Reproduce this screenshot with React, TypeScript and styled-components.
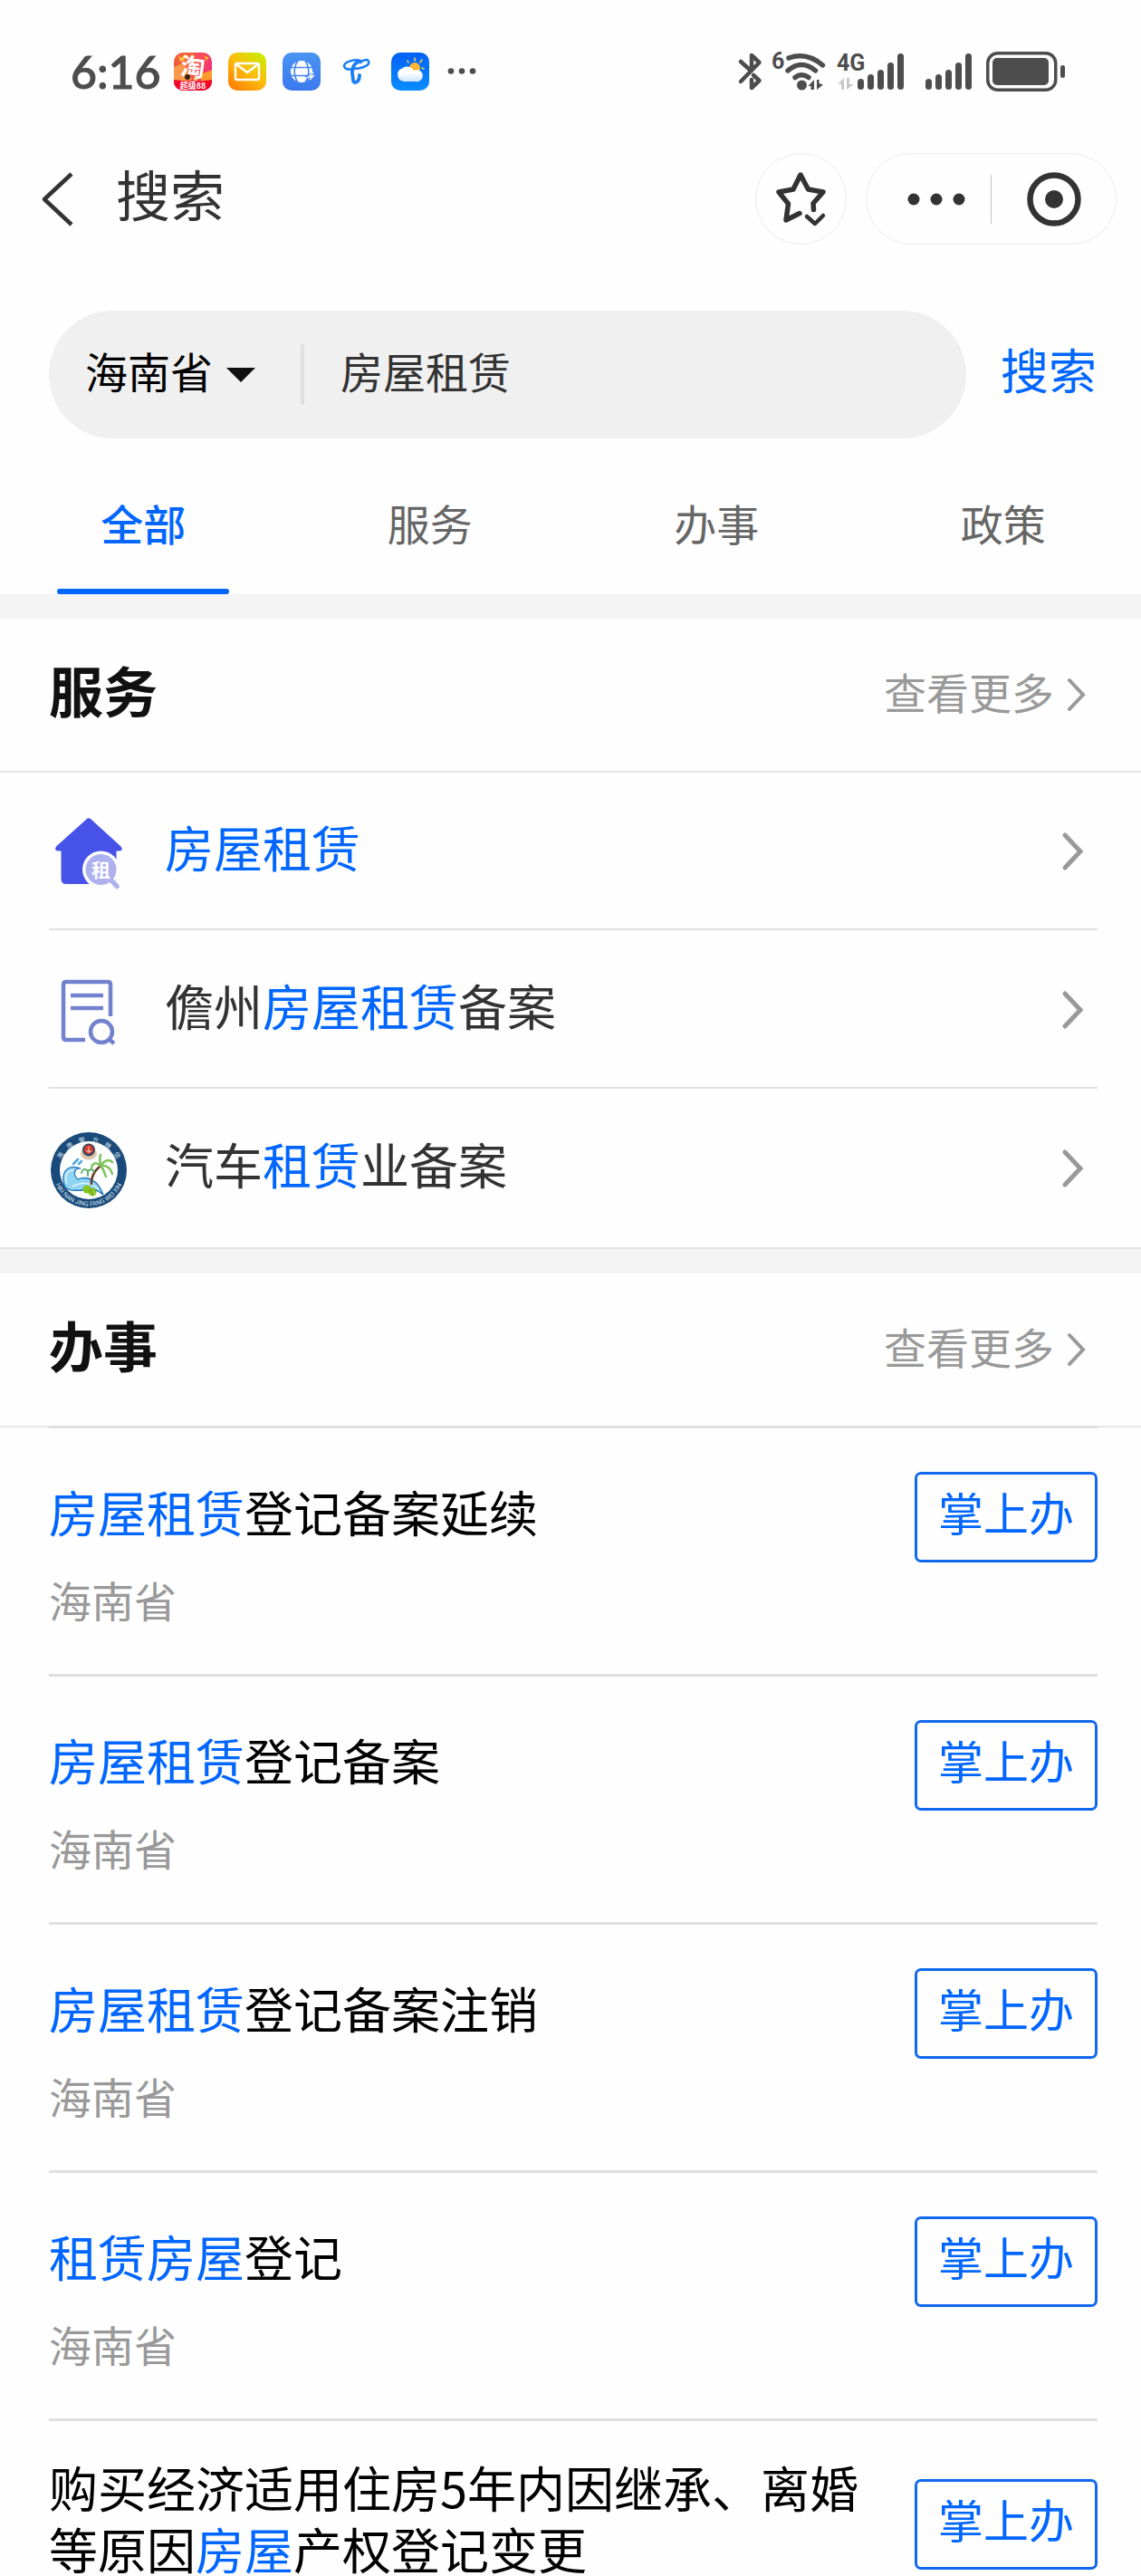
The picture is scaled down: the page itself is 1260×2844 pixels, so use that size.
import React from "react";
import styled, { createGlobalStyle } from "styled-components";

const BLUE = "#0066ff";
const INK = "#333333";
const STATUS = "#4d4d4d";
const MUTED = "#999999";

const GlobalStyle = createGlobalStyle`
  *, *::before, *::after { box-sizing: border-box; }
  body { margin: 0; background: #fefefe; }
  body, button, input, select {
    font-family: "Noto Sans CJK SC", "Noto Sans", sans-serif;
  }
  ul, h1, h2, p { margin: 0; padding: 0; list-style: none; }
  a { color: inherit; text-decoration: none; }
  button { padding: 0; border: 0; background: none; color: inherit; cursor: pointer; }
  svg { display: block; flex: none; overflow: visible; }
`;

const Page = styled.div`
  height: 100vh;
  overflow: hidden;
  background: #fefefe;
  color: #000;
`;

/* ---------- status bar ---------- */

const StatusBar = styled.div`
  display: flex;
  justify-content: space-between;
  align-items: center;
  height: 158px;
  padding: 0 83px 0 78px;
`;

const StatusGroup = styled.div<{ $gap: number }>`
  display: flex;
  align-items: center;
  gap: ${(p) => p.$gap}px;
`;

const Clock = styled.span`
  width: 96px;
  font-family: Lato, sans-serif;
  font-size: 50px;
  line-height: 60px;
  font-weight: 500;
  color: ${STATUS};
  -webkit-text-stroke: 1px ${STATUS};
`;

/* ---------- navigation ---------- */

const NavBar = styled.header`
  display: flex;
  align-items: center;
  height: 123px;
  padding: 0 27px 0 42px;
`;

const BackButton = styled.button`
  display: flex;
  width: 86px;
`;

const NavTitle = styled.h1`
  flex: 1;
  padding-bottom: 14px;
  font-size: 60px;
  line-height: 72px;
  font-weight: 400;
  color: ${INK};
`;

const RoundButton = styled.button`
  display: flex;
  align-items: center;
  justify-content: center;
  width: 101px;
  height: 101px;
  margin-right: 21px;
  border: 1px solid #ebebeb;
  border-radius: 50%;
`;

const Capsule = styled.div`
  display: flex;
  align-items: center;
  width: 277px;
  height: 101px;
  border: 1px solid #ebebeb;
  border-radius: 51px;
`;

const CapsuleButton = styled.button`
  display: flex;
  flex: 1;
  align-items: center;
  justify-content: center;
  height: 54px;
  & + & { border-left: 1px solid #c4c4c4; }
  &:first-child {
    flex: none;
    width: 137px;
    padding-left: 17px;
  }
`;

/* ---------- search ---------- */

const SearchForm = styled.form`
  display: flex;
  align-items: center;
  gap: 38px;
  padding: 62px 49px 0 54px;
`;

const SearchBox = styled.div`
  display: flex;
  flex: 1;
  align-items: center;
  min-width: 0;
  height: 141px;
  padding: 0 40px;
  border-radius: 71px;
  background: #f0f0f0;
`;

const Region = styled.label`
  display: flex;
  align-items: center;
  gap: 15px;
  padding-right: 50px;
  border-right: 4px solid #e0e0e0;
  height: 67px;
`;

const RegionSelect = styled.select`
  appearance: none;
  width: 141px;
  height: 72px;
  margin-bottom: 10px;
  padding: 0;
  border: 0;
  background: none;
  font-size: 47px;
  color: #000;
`;

const SearchInput = styled.input`
  flex: 1;
  min-width: 0;
  height: 72px;
  margin-bottom: 10px;
  padding: 0 0 0 40px;
  border: 0;
  outline: 0;
  background: none;
  font-size: 47px;
  color: ${INK};
`;

const SearchSubmit = styled.button`
  padding-bottom: 14px;
  font-size: 53px;
  line-height: 68px;
  color: ${BLUE};
`;

/* ---------- tabs ---------- */

const Tabs = styled.nav`
  display: flex;
  height: 172px;
  margin-right: -6px;
`;

const Tab = styled.button<{ $active?: boolean }>`
  position: relative;
  flex: 1;
  padding-top: 12px;
  font-size: 47px;
  font-weight: ${(p) => (p.$active ? 500 : 400)};
  color: ${(p) => (p.$active ? BLUE : "#666666")};
  &::after {
    content: "";
    position: absolute;
    left: 20%;
    right: 20%;
    bottom: 0;
    height: 6px;
    border-radius: 3px;
    background: ${(p) => (p.$active ? BLUE : "transparent")};
  }
`;

/* ---------- sections ---------- */

const Section = styled.section`
  border-top: 27px solid #f4f4f4;
`;

const SectionHeader = styled.div`
  display: flex;
  align-items: center;
  justify-content: space-between;
  height: 170px;
  padding: 0 60px 0 54px;
  border-bottom: 2px solid #e6e6e6;
`;

const SectionTitle = styled.h2`
  padding-bottom: 12px;
  font-size: 60px;
  line-height: 72px;
  font-weight: 700;
  color: #111;
`;

const MoreLink = styled.a`
  display: flex;
  align-items: center;
  gap: 14px;
  font-size: 47px;
  line-height: 64px;
  color: ${MUTED};
  span { padding-bottom: 8px; }
`;

const ServiceList = styled.ul`
  margin-top: -1px;
  border-bottom: 2px solid #e6e6e6;
`;

const ServiceItem = styled.li`
  margin: 0 48px 0 54px;
  border-bottom: 2px solid #e0e0e0;
  &:last-child { border-bottom-color: transparent; }
`;

const ServiceLink = styled.a`
  display: flex;
  align-items: center;
  height: 173px;
  padding: 2px 14px 0 0;
`;

const ServiceName = styled.span`
  flex: 1;
  padding: 0 0 10px 40px;
  font-size: 54px;
  line-height: 68px;
  color: ${INK};
`;

const Mark = styled.em`
  font-style: normal;
  color: ${BLUE};
`;

const AffairList = styled.ul`
  margin: -2px 48px 0 54px;
`;

const AffairItem = styled.li`
  min-height: 274px;
  padding: 39px 0 0;
  border-top: 3px solid #dfdfdf;
`;

const AffairMain = styled.div`
  display: flex;
  align-items: center;
  justify-content: space-between;
  gap: 20px;
  min-height: 118px;
`;

const AffairTitle = styled.a`
  padding-bottom: 13px;
  font-size: 54px;
  line-height: 68px;
  color: #000;
`;

const AffairRegion = styled.p`
  font-size: 47px;
  line-height: 64px;
  color: ${MUTED};
`;

const HandleButton = styled.button`
  flex: none;
  width: 202px;
  height: 100px;
  padding-bottom: 14px;
  border: 3px solid #1068ef;
  border-radius: 7px;
  font-size: 50px;
  line-height: 64px;
  color: ${BLUE};
`;

/* ---------- icons ---------- */

const TaobaoIcon = () => (
  <svg width="42" height="42" viewBox="0 0 42 42">
    <defs>
      <linearGradient id="tb" x1="0" y1="0" x2="1" y2="0.3">
        <stop offset="0" stopColor="#ef5a3a" />
        <stop offset="0.5" stopColor="#f5663c" />
        <stop offset="1" stopColor="#f4307a" />
      </linearGradient>
      <clipPath id="tbc"><rect width="42" height="42" rx="10" /></clipPath>
    </defs>
    <g clipPath="url(#tbc)">
      <rect width="42" height="42" fill="url(#tb)" />
      <path d="M0 16 10 12 20 30 0 32z" fill="#fb9a4a" />
      <path d="M22 0 34 0 26 12z" fill="#fa4b5c" />
      <path d="M5 3 8 6 12 2 12 8 7 10z" fill="#ffc93c" />
      <path d="M33 4 39 5 36 9z" fill="#ffb02e" />
      <path d="M30 24 42 19 42 32 30 32z" fill="#ff9a2a" />
      <path d="M0 30Q21 34 42 30V42H0z" fill="#f3062c" />
    </g>
    <text x="21" y="26" fontSize="27" fontWeight="700" fill="#fff" textAnchor="middle" transform="rotate(6 21 16)">淘</text>
    <circle cx="15" cy="27" r="3" fill="#3a2412" />
    <circle cx="24" cy="29" r="2" fill="#ffd98a" />
    <text x="21" y="40" fontSize="9" fontWeight="700" fill="#fff" textAnchor="middle">超级88</text>
  </svg>
);

const MailIcon = () => (
  <svg width="42" height="42" viewBox="0 0 42 42">
    <defs>
      <linearGradient id="ml" x1="0.1" y1="1" x2="0.9" y2="0">
        <stop offset="0" stopColor="#ff7a00" />
        <stop offset="0.5" stopColor="#fdbb0c" />
        <stop offset="1" stopColor="#c6f000" />
      </linearGradient>
    </defs>
    <rect width="42" height="42" rx="10" fill="url(#ml)" />
    <rect x="8" y="12" width="26" height="18" rx="2" fill="none" stroke="#fff" strokeWidth="2.4" />
    <path d="M9 13 21 22 33 13" fill="none" stroke="#fff" strokeWidth="2.4" strokeLinejoin="round" />
  </svg>
);

const GlobeIcon = () => (
  <svg width="42" height="42" viewBox="0 0 42 42">
    <defs>
      <linearGradient id="gl" x1="0" y1="0" x2="0" y2="1">
        <stop offset="0" stopColor="#4a94f2" />
        <stop offset="1" stopColor="#3c78ee" />
      </linearGradient>
    </defs>
    <rect width="42" height="42" rx="10" fill="url(#gl)" />
    <circle cx="21" cy="21" r="12" fill="#fff" />
    <g fill="none" stroke="#4385f0" strokeWidth="1.6">
      <path d="M8 16.500H34M8 25.500H34" />
      <path d="M17 9C12 16 12 26 17 33M25 9C30 16 30 26 25 33" />
    </g>
    <path d="M34 23 28 26 32 27 28 32" fill="none" stroke="#4385f0" strokeWidth="3" />
    <path d="M34 22 29 27 34 26 30 30" fill="none" stroke="#fff" strokeWidth="1.5" />
  </svg>
);

const TelecomIcon = () => (
  <svg width="42" height="42" viewBox="0 0 42 42" fill="none" stroke="#1a7ef5" strokeLinecap="round">
    <path d="M26 9C20 7 8 10 8 15 9 19 14 19 18 18 28 18 37 14 35 9.500 34 7 29 8 26 11" strokeWidth="2.600" />
    <path d="M24 10C19 12 16 18 17 23 18 27 17 34 20.500 33 24 32 25 28 25 25" strokeWidth="3.800" />
  </svg>
);

const WeatherIcon = () => (
  <svg width="42" height="42" viewBox="0 0 42 42">
    <defs>
      <linearGradient id="we" x1="0" y1="0" x2="0" y2="1">
        <stop offset="0" stopColor="#0062f5" />
        <stop offset="1" stopColor="#0a8cff" />
      </linearGradient>
      <linearGradient id="cl" x1="0" y1="0" x2="0" y2="1">
        <stop offset="0.4" stopColor="#fff" />
        <stop offset="1" stopColor="#cfe4ff" />
      </linearGradient>
    </defs>
    <rect width="42" height="42" rx="10" fill="url(#we)" />
    <circle cx="26" cy="17" r="6" fill="#ffb52e" />
    <path d="M26 9V6M32 11 34 8M34 17 36 18M19 11 18 9M32 22 34 24" stroke="#f5d060" strokeWidth="1.600" strokeLinecap="round" />
    <path d="M14 32A7.500 7.500 0 0 1 12 17.500 8.500 8.500 0 0 1 25 20 6.500 6.500 0 1 1 27 32Z" fill="url(#cl)" />
  </svg>
);

const StatusDots = () => (
  <svg width="42" height="42" viewBox="0 0 42 42" fill={STATUS}>
    <circle cx="6" cy="20.500" r="3.300" />
    <circle cx="18" cy="20.500" r="3.300" />
    <circle cx="30" cy="20.500" r="3.300" />
  </svg>
);

const BluetoothIcon = () => (
  <svg width="25" height="44" viewBox="0 0 25 44" fill="none" stroke={STATUS} strokeWidth="4.500" strokeLinecap="round" strokeLinejoin="round">
    <path d="M2 11 12 20M14 20V4L22.500 12 2 33" />
    <path d="M14 31V40L22.500 32 16 26" />
  </svg>
);

const WifiIcon = () => (
  <svg width="60" height="44" viewBox="0 0 60 44">
    <text x="-1" y="19" fontFamily="Roboto, sans-serif" fontSize="25" fontWeight="700" fill={STATUS}>6</text>
    <g fill="none" stroke={STATUS} strokeWidth="5.500" strokeLinecap="round">
      <path d="M18 7Q38 0 55.500 15" />
      <path d="M17 21Q32 8 47.500 21" />
      <path d="M25 28.500Q32 23 40 28.500" />
    </g>
    <circle cx="32.500" cy="37" r="5.500" fill={STATUS} />
    <path d="M46 31V42H42.500V38H39.500ZM49 42V31H51.500V35L56 36.500Z" fill={STATUS} />
  </svg>
);

const BAR_TOPS = [30, 25, 20, 12, 2];

const SignalBars = ({ x }: { x: number }) => (
  <g fill={STATUS}>
    {BAR_TOPS.map((top, i) => (
      <rect key={top} x={x + i * 11} y={top} width="7" height={42 - top} rx="3.500" />
    ))}
  </g>
);

const MobileIcon = () => (
  <svg width="85" height="44" viewBox="0 0 85 44">
    <text x="-1" y="21" fontFamily="Roboto, sans-serif" fontSize="25" fontWeight="700" fill={STATUS}>4G</text>
    <path d="M7 29V42H4V36H0ZM10 42V29H13V36H18Z" fill="#c8c8c8" />
    <SignalBars x={22} />
  </svg>
);

const SignalIcon = () => (
  <svg width="55" height="44" viewBox="0 0 55 44">
    <SignalBars x={0} />
  </svg>
);

const BatteryIcon = () => (
  <svg width="88" height="44" viewBox="0 0 88 44">
    <rect x="1.750" y="1.750" width="75" height="40.500" rx="11" fill="none" stroke={STATUS} strokeWidth="3.500" />
    <rect x="7" y="7" width="62" height="30" rx="5" fill={STATUS} />
    <rect x="82" y="15" width="5" height="14" rx="2.500" fill={STATUS} />
  </svg>
);

const BackIcon = () => (
  <svg width="44" height="60" viewBox="0 0 44 60">
    <path d="M37 2 7 30 37 58" fill="none" stroke={INK} strokeWidth="4.500" strokeLinejoin="round" />
  </svg>
);

const StarIcon = () => (
  <svg width="53" height="60" viewBox="0 0 53 60" fill="none" stroke={INK} strokeWidth="5.500" strokeLinecap="round" strokeLinejoin="round">
    <path d="M25 45.500 10 53 12.500 35 2 22 18 19 26 3 34.500 19 51 22 40 34.500 40.500 41.500" />
    <path d="M33 49 42 57 51 48" strokeWidth="4.500" />
  </svg>
);

const MoreDots = () => (
  <svg width="64" height="14" viewBox="0 0 64 14" fill={INK}>
    <circle cx="7" cy="7" r="6.500" />
    <circle cx="32" cy="7" r="6.500" />
    <circle cx="57" cy="7" r="6.500" />
  </svg>
);

const TargetIcon = () => (
  <svg width="60" height="60" viewBox="0 0 60 60">
    <circle cx="30" cy="30" r="26.500" fill="none" stroke={INK} strokeWidth="6.500" />
    <circle cx="30" cy="30" r="10" fill={INK} />
  </svg>
);

const CaretIcon = () => (
  <svg width="32" height="16" viewBox="0 0 32 16">
    <path d="M0 0H32L16 16Z" fill="#111" />
  </svg>
);

const Chevron = ({ small }: { small?: boolean }) =>
  small ? (
    <svg width="22" height="38" viewBox="0 0 22 38">
      <path d="M3 3 18 19 3 35" fill="none" stroke={MUTED} strokeWidth="4" strokeLinecap="round" />
    </svg>
  ) : (
    <svg width="26" height="42" viewBox="0 0 26 42">
      <path d="M4 3 21 21 4 39" fill="none" stroke={MUTED} strokeWidth="5" strokeLinecap="round" />
    </svg>
  );

const HouseIcon = () => (
  <svg width="88" height="88" viewBox="0 0 88 88">
    <path
      d="M41.500 8.500Q44 6 46.500 8.500L79.500 38.500Q82.500 43 78 43.500H74.500V80H19Q13.500 80 13.500 74V43.500H10Q5.500 43 8 38.500Z"
      fill="#4753e8"
    />
    <circle cx="57.500" cy="64" r="20.500" fill="#fefefe" />
    <path d="M66 76 80 90" stroke="#fefefe" strokeWidth="12" />
    <path d="M69 76 75 82.500" stroke="#adb1ee" strokeWidth="5.500" strokeLinecap="round" />
    <circle cx="57.500" cy="64" r="17" fill="#adb1ee" />
    <text x="57.500" y="72" fontSize="21" fontWeight="700" fill="#fff" textAnchor="middle">租</text>
  </svg>
);

const DocumentIcon = () => (
  <svg width="88" height="88" viewBox="0 -3 88 88" fill="none" stroke="#7382ce" strokeWidth="4.500">
    <path d="M40 74H19Q16 74 16 71V13Q16 10 19 10H65Q68 10 68 13V48" />
    <path d="M24 25H60M24 39H60" />
    <circle cx="58" cy="65" r="12" />
    <path d="M66 73 72 78" />
  </svg>
);

const PoliceIcon = () => (
  <svg width="88" height="88" viewBox="0 -2 88 88">
    <defs>
      <path id="ringTop" d="M9.500 47A34.500 34.500 0 1 1 78.500 47" />
      <path id="ringBottom" d="M4.500 44A39.500 39.500 0 0 0 83.500 44" />
    </defs>
    <circle cx="44" cy="44" r="42" fill="#1a4a7a" />
    <circle cx="44" cy="44" r="32" fill="#fdfefe" />
    <g fill="#d5e2ee" textAnchor="middle" fontSize="7">
      <text><textPath href="#ringTop" startOffset="50%">海　南　警　方　微　信</textPath></text>
      <text fontFamily="Roboto, sans-serif"><textPath href="#ringBottom" startOffset="50%">HAI NAN JING FANG WEI XIN</textPath></text>
    </g>
    <ellipse cx="44" cy="26" rx="9" ry="6.500" fill="#dcc8ac" />
    <circle cx="44" cy="21.500" r="7" fill="#3a4660" />
    <circle cx="44" cy="21" r="5" fill="#d8392f" />
    <path d="M41 23H47M44 18V25" stroke="#f3d9c0" strokeWidth="1" />
    <path d="M18 63C11 45 22 37 35 42 28 41 26 49 32 54 42 50 54 54 60 71 48 60 38 68 30 66 25 67 22 66 18 63Z" fill="#8fd3f5" stroke="#2277b8" strokeWidth="1.300" />
    <path d="M20 59C16 50 21 44 27 44M26 62C36 56 48 58 55 65" fill="none" stroke="#e4f6fd" strokeWidth="1.500" />
    <path d="M27 37 32 32M33 37 36 34" stroke="#4aa6dc" strokeWidth="2.500" strokeLinecap="round" />
    <path d="M47 60C46 51 51 44 57 39" fill="none" stroke="#6b3420" strokeWidth="2.500" />
    <g fill="none" stroke="#7cc35a" strokeWidth="2.500" strokeLinecap="round">
      <path d="M57 39C51 34 48 37 47 41M57 39C56 33 56 30 57 27M57 39C62 32 67 32 70 35M57 39C64 38 68 42 70 48M57 39C60 42 61 46 63 51" />
      <path d="M43 45C39 41 37 43 36 47M43 45C46 42 49 43 50 46M43 45V50" stroke="#4fae5e" strokeWidth="1.800" />
    </g>
    <circle cx="42" cy="65" r="4.500" fill="#86c41e" />
    <circle cx="48" cy="68" r="4.500" fill="#7ab81b" />
    <path d="M43 69 47 72M49 66 51 71" fill="none" stroke="#c5e668" />
  </svg>
);

/* ---------- data ---------- */

/* Text in square brackets is a matched keyword. */
const highlight = (text: string) =>
  text.split(/(\[[^\]]+\])/).map((part, i) =>
    part.startsWith("[") ? <Mark key={i}>{part.slice(1, -1)}</Mark> : part
  );

const TABS = ["全部", "服务", "办事", "政策"];

const SERVICES = [
  { name: "[房屋租赁]", Icon: HouseIcon },
  { name: "儋州[房屋租赁]备案", Icon: DocumentIcon },
  { name: "汽车[租赁]业备案", Icon: PoliceIcon },
];

const AFFAIRS = [
  { title: "[房屋租赁]登记备案延续", region: "海南省" },
  { title: "[房屋租赁]登记备案", region: "海南省" },
  { title: "[房屋租赁]登记备案注销", region: "海南省" },
  { title: "[租赁房屋]登记", region: "海南省" },
  { title: "购买经济适用住房5年内因继承、离婚等原因[房屋]产权登记变更" },
];

const SectionHead = ({ title }: { title: string }) => (
  <SectionHeader>
    <SectionTitle>{title}</SectionTitle>
    <MoreLink href="#">
      <span>查看更多</span>
      <Chevron small />
    </MoreLink>
  </SectionHeader>
);

export default function App() {
  return (
    <Page>
      <GlobalStyle />
      <StatusBar>
        <StatusGroup $gap={18}>
          <Clock>6:16</Clock>
          <TaobaoIcon />
          <MailIcon />
          <GlobeIcon />
          <TelecomIcon />
          <WeatherIcon />
          <StatusDots />
        </StatusGroup>
        <StatusGroup $gap={12}>
          <BluetoothIcon />
          <WifiIcon />
          <MobileIcon />
          <SignalIcon />
          <BatteryIcon />
        </StatusGroup>
      </StatusBar>

      <NavBar>
        <BackButton aria-label="返回"><BackIcon /></BackButton>
        <NavTitle>搜索</NavTitle>
        <RoundButton aria-label="收藏"><StarIcon /></RoundButton>
        <Capsule>
          <CapsuleButton aria-label="更多"><MoreDots /></CapsuleButton>
          <CapsuleButton aria-label="关闭"><TargetIcon /></CapsuleButton>
        </Capsule>
      </NavBar>

      <SearchForm onSubmit={(e) => e.preventDefault()}>
        <SearchBox>
          <Region>
            <RegionSelect aria-label="地区" defaultValue="海南省">
              <option>海南省</option>
            </RegionSelect>
            <CaretIcon />
          </Region>
          <SearchInput aria-label="搜索内容" defaultValue="房屋租赁" />
        </SearchBox>
        <SearchSubmit type="submit">搜索</SearchSubmit>
      </SearchForm>

      <Tabs>
        {TABS.map((tab, i) => (
          <Tab key={tab} $active={i === 0}>{tab}</Tab>
        ))}
      </Tabs>

      <Section>
        <SectionHead title="服务" />
        <ServiceList>
          {SERVICES.map(({ name, Icon }) => (
            <ServiceItem key={name}>
              <ServiceLink href="#">
                <Icon />
                <ServiceName>{highlight(name)}</ServiceName>
                <Chevron />
              </ServiceLink>
            </ServiceItem>
          ))}
        </ServiceList>
      </Section>

      <Section>
        <SectionHead title="办事" />
        <AffairList>
          {AFFAIRS.map(({ title, region }) => (
            <AffairItem key={title}>
              <AffairMain>
                <AffairTitle href="#">{highlight(title)}</AffairTitle>
                <HandleButton>掌上办</HandleButton>
              </AffairMain>
              {region && <AffairRegion>{region}</AffairRegion>}
            </AffairItem>
          ))}
        </AffairList>
      </Section>
    </Page>
  );
}
